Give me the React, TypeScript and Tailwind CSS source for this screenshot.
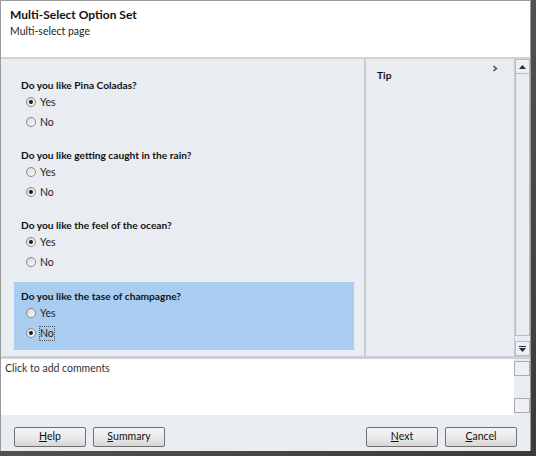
import React from 'react';

const font = { fontFamily: 'Lato, "Open Sans", sans-serif' };

interface QuestionProps {
    text: string;
    value: 'Yes' | 'No';
    highlighted?: boolean;
}

const Radio: React.FC<{ checked: boolean; label: string; focused?: boolean }> = ({ checked, label, focused }) => (
    <div className="flex items-center h-[20px] pl-[5px]">
        <span className="w-[10px] h-[10px] rounded-full border border-[#8a8a8a] bg-gradient-to-br from-[#d4d4d4] to-white flex items-center justify-center">
            {checked && <span className="w-[4px] h-[4px] rounded-full bg-[#1a1a1a]" />}
        </span>
        <span
            className={
                'ml-[4px] text-[10.5px] leading-[13px] text-[#1e1e1e] ' +
                (focused ? 'outline outline-1 outline-dotted outline-[#555]' : '')
            }
        >
            {label}
        </span>
    </div>
);

const Question: React.FC<QuestionProps> = ({ text, value, highlighted }) => (
    <div className={'ml-[13px] mr-[10px] pl-[7px] pt-[8px] ' + (highlighted ? 'bg-[#a9cdf1] mt-[1px] pb-[7px]' : 'pb-[9px]')}>
        <p className="text-[10.2px] font-bold leading-[13px] text-[#111]">{text}</p>
        <div>
            <Radio checked={value === 'Yes'} label="Yes" />
            <Radio checked={value === 'No'} label="No" focused={highlighted && value === 'No'} />
        </div>
    </div>
);

const WinButton: React.FC<{ label: string; className?: string }> = ({ label, className }) => (
    <button
        className={
            'w-[72px] h-[20px] border border-[#707070] rounded-[2px] bg-gradient-to-b from-[#f4f4f4] via-[#ebebeb] to-[#d6d6d6] text-[10.5px] text-[#111] flex items-center justify-center ' +
            (className ?? '')
        }
    >
        <span className="underline decoration-[#111] underline-offset-1">{label.charAt(0)}</span>
        {label.slice(1)}
    </button>
);

export default function App() {
    return (
        <div className="w-[536px] h-[456px] bg-gradient-to-br from-[#6a6a6a] to-[#3a3a3a]" style={font}>
            <div className="w-[531px] h-[451px] flex flex-col border-l border-t border-r border-[#9a9a9a] bg-[#e9ecf1]">
                <div className="h-[58px] bg-white px-[9px] pt-[6px] border-b-2 border-[#cfd2d6]">
                    <h1 className="text-[12px] font-bold leading-[16px] text-[#111]">Multi-Select Option Set</h1>
                    <p className="text-[10.5px] leading-[15px] mt-[1px] text-[#1e1e1e]">Multi-select page</p>
                </div>
                <div className="h-[300px] flex border-b-[3px] border-[#cdd0d4]">
                    <div className="w-[365px] pt-[12px] border-r-2 border-[#c9ccd0]">
                        <Question text="Do you like Pina Coladas?" value="Yes" />
                        <Question text="Do you like getting caught in the rain?" value="No" />
                        <Question text="Do you like the feel of the ocean?" value="Yes" />
                        <Question text="Do you like the tase of champagne?" value="No" highlighted />
                    </div>
                    <div className="w-[148px] relative pl-[11px] pt-[10px]">
                        <p className="text-[10.2px] font-bold leading-[13px] text-[#111]">Tip</p>
                        <svg className="absolute right-[16px] top-[6px]" width="6" height="7" viewBox="0 0 6 7">
                            <path d="M1.5 1 L4.5 3.5 L1.5 6" fill="none" stroke="#444" strokeWidth="1.4" />
                        </svg>
                    </div>
                    <div className="w-[16px] flex flex-col border-l border-[#c9ccd0] bg-[#e9ecf1]">
                        <div className="h-[15px] border border-[#b9bcc0] bg-[#eef0f3] flex items-center justify-center">
                            <svg width="7" height="4" viewBox="0 0 7 4">
                                <path d="M0 4 L3.5 0 L7 4 Z" fill="#1d3046" />
                            </svg>
                        </div>
                        <div className="flex-1 border-x border-b border-[#b9bcc0] bg-[#e9ecf1] mb-[5px]" />
                        <div className="h-[15px] border border-[#b9bcc0] bg-[#eef0f3] flex flex-col items-center justify-center">
                            <span className="w-[7px] h-[1px] bg-[#1d3046] mb-[1px]" />
                            <svg width="7" height="4" viewBox="0 0 7 4">
                                <path d="M0 0 L7 0 L3.5 4 Z" fill="#1d3046" />
                            </svg>
                        </div>
                    </div>
                </div>
                <div className="h-[56px] flex bg-white">
                    <div className="flex-1 pl-[4px] pt-[2px] text-[10.5px] leading-[14px] text-[#333]">Click to add comments</div>
                    <div className="w-[16px] flex flex-col bg-[#e9ecf1] py-[2px]">
                        <div className="h-[15px] border border-[#a9acb0] bg-[#eef0f3]" />
                        <div className="flex-1" />
                        <div className="h-[15px] border border-[#a9acb0] bg-[#eef0f3]" />
                    </div>
                </div>
                <div className="flex-1 flex items-start pt-[12px] px-[13px]">
                    <WinButton label="Help" />
                    <WinButton label="Summary" className="ml-[7px]" />
                    <div className="flex-1" />
                    <WinButton label="Next" />
                    <WinButton label="Cancel" className="ml-[7px]" />
                </div>
            </div>
        </div>
    );
}
